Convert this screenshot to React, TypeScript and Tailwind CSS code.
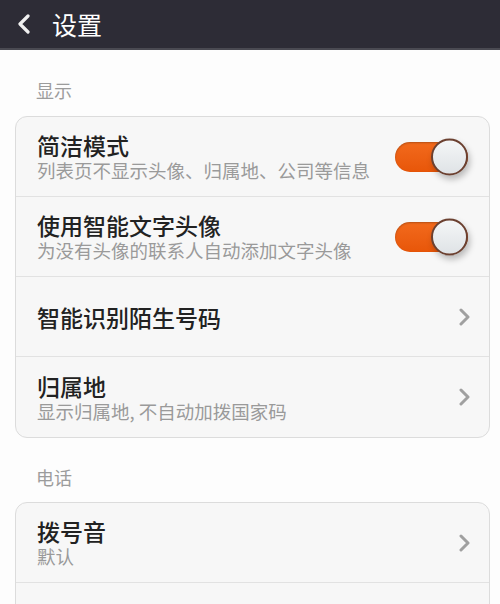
import React from "react";

const font = { fontFamily: '"Noto Sans CJK SC", "Noto Sans", sans-serif' };

function Toggle() {
  return (
    <div className="relative h-[30px] w-[73px] shrink-0">
      <div className="absolute inset-0 rounded-full bg-gradient-to-b from-[#f26a1c] to-[#e85608] shadow-[inset_0_1px_2px_rgba(0,0,0,0.25)]" />
      <div className="absolute right-0 top-1/2 h-[37px] w-[37px] -translate-y-1/2 rounded-full border-2 border-[#6b4030] bg-gradient-to-b from-[#f4f6f7] to-[#dfe3e6] shadow-[2px_4px_6px_rgba(0,0,0,0.25)]" />
    </div>
  );
}

function Chevron() {
  return (
    <svg viewBox="0 0 12 18" className="-mr-[3px] h-[18px] w-[12px] shrink-0">
      <path d="M2 2l7 7-7 7" fill="none" stroke="#a0a0a0" strokeWidth="3" strokeLinecap="round" strokeLinejoin="round" />
    </svg>
  );
}

function Row({ title, sub, right, last }: { title?: string; sub?: string; right?: React.ReactNode; last?: boolean }) {
  return (
    <div className={`flex h-[80px] items-center justify-between pl-[21px] pr-[21px] ${last ? "" : "border-b border-[#e2e2e2]"}`}>
      <div className="flex flex-col">
        {title && <span className="text-[23px] leading-[28px] font-medium text-[#222]">{title}</span>}
        {sub && <span className="text-[18.5px] leading-[23px] text-[#9a9a9a]">{sub}</span>}
      </div>
      {right}
    </div>
  );
}

export default function App() {
  return (
    <div className="h-[604px] w-[500px] overflow-hidden bg-[#fdfdfd]" style={font}>
      {/* Header */}
      <div className="flex h-[50px] items-center border-b-2 border-[#4a4a52] bg-[#2d2c36] pl-[16px]">
        <svg viewBox="0 0 16 20" className="h-[20px] w-[16px]">
          <path d="M12 2L4 10l8 8" fill="none" stroke="#f0f0f0" strokeWidth="3.2" strokeLinecap="round" strokeLinejoin="round" />
        </svg>
        <span className="ml-[20px] text-[25px] leading-none text-white">设置</span>
      </div>

      <div className="px-[36px] pt-[28px] pb-[14px] text-[18px] leading-[24px] text-[#9c9c9c]">显示</div>
      <div className="ml-[15px] mr-[10px] overflow-hidden rounded-[12px] border border-[#dcdcdc] bg-[#f7f7f7]">
        <Row title="简洁模式" sub="列表页不显示头像、归属地、公司等信息" right={<Toggle />} />
        <Row title="使用智能文字头像" sub="为没有头像的联系人自动添加文字头像" right={<Toggle />} />
        <Row title="智能识别陌生号码" right={<Chevron />} />
        <Row title="归属地" sub="显示归属地, 不自动加拨国家码" right={<Chevron />} last />
      </div>

      <div className="px-[36px] pt-[27px] pb-[13px] text-[18px] leading-[24px] text-[#9c9c9c]">电话</div>
      <div className="ml-[15px] mr-[10px] overflow-hidden rounded-[12px] border border-[#dcdcdc] bg-[#f7f7f7]">
        <Row title="拨号音" sub="默认" right={<Chevron />} />
        <Row last />
      </div>
    </div>
  );
}
